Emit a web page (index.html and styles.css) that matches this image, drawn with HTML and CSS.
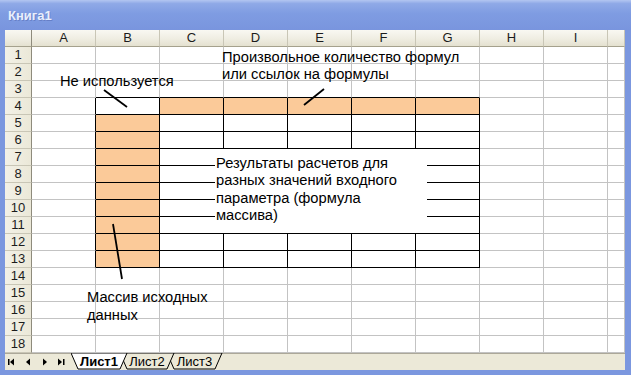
FILE: index.html
```html
<!DOCTYPE html>
<html lang="ru">
<head>
<meta charset="utf-8">
<title>Книга1</title>
<link rel="stylesheet" href="styles.css">
</head>
<body>
<div class="window">
  <div class="titlebar"><span class="title">Книга1</span></div>
  <div class="client">
    <div class="sheet">
      <div class="grid">
        <div class="cn"></div><div class="ch">A</div><div class="ch">B</div><div class="ch">C</div><div class="ch">D</div><div class="ch">E</div><div class="ch">F</div><div class="ch">G</div><div class="ch">H</div><div class="ch">I</div><div class="ch"></div>

        <div class="rh">1</div><div class="c"></div><div class="c"></div><div class="c"></div><div class="c"></div><div class="c"></div><div class="c"></div><div class="c"></div><div class="c"></div><div class="c"></div><div class="c"></div>
        <div class="rh">2</div><div class="c"></div><div class="c"></div><div class="c"></div><div class="c"></div><div class="c"></div><div class="c"></div><div class="c"></div><div class="c"></div><div class="c"></div><div class="c"></div>
        <div class="rh">3</div><div class="c"></div><div class="c bb"></div><div class="c bb"></div><div class="c bb"></div><div class="c bb"></div><div class="c bb"></div><div class="c bb"></div><div class="c"></div><div class="c"></div><div class="c"></div>
        <div class="rh">4</div><div class="c br"></div><div class="c br bb"></div><div class="c o br bb"></div><div class="c o br bb"></div><div class="c o br bb"></div><div class="c o br bb"></div><div class="c o br bb"></div><div class="c"></div><div class="c"></div><div class="c"></div>
        <div class="rh">5</div><div class="c br"></div><div class="c o br bb"></div><div class="c br bb"></div><div class="c br bb"></div><div class="c br bb"></div><div class="c br bb"></div><div class="c br bb"></div><div class="c"></div><div class="c"></div><div class="c"></div>
        <div class="rh">6</div><div class="c br"></div><div class="c o br bb"></div><div class="c br bb"></div><div class="c br bb"></div><div class="c br bb"></div><div class="c br bb"></div><div class="c br bb"></div><div class="c"></div><div class="c"></div><div class="c"></div>
        <div class="rh">7</div><div class="c br"></div><div class="c o br bb"></div><div class="c br bb"></div><div class="c br bb"></div><div class="c br bb"></div><div class="c br bb"></div><div class="c br bb"></div><div class="c"></div><div class="c"></div><div class="c"></div>
        <div class="rh">8</div><div class="c br"></div><div class="c o br bb"></div><div class="c br bb"></div><div class="c br bb"></div><div class="c br bb"></div><div class="c br bb"></div><div class="c br bb"></div><div class="c"></div><div class="c"></div><div class="c"></div>
        <div class="rh">9</div><div class="c br"></div><div class="c o br bb"></div><div class="c br bb"></div><div class="c br bb"></div><div class="c br bb"></div><div class="c br bb"></div><div class="c br bb"></div><div class="c"></div><div class="c"></div><div class="c"></div>
        <div class="rh">10</div><div class="c br"></div><div class="c o br bb"></div><div class="c br bb"></div><div class="c br bb"></div><div class="c br bb"></div><div class="c br bb"></div><div class="c br bb"></div><div class="c"></div><div class="c"></div><div class="c"></div>
        <div class="rh">11</div><div class="c br"></div><div class="c o br bb"></div><div class="c br bb"></div><div class="c br bb"></div><div class="c br bb"></div><div class="c br bb"></div><div class="c br bb"></div><div class="c"></div><div class="c"></div><div class="c"></div>
        <div class="rh">12</div><div class="c br"></div><div class="c o br bb"></div><div class="c br bb"></div><div class="c br bb"></div><div class="c br bb"></div><div class="c br bb"></div><div class="c br bb"></div><div class="c"></div><div class="c"></div><div class="c"></div>
        <div class="rh">13</div><div class="c br"></div><div class="c o br bb"></div><div class="c br bb"></div><div class="c br bb"></div><div class="c br bb"></div><div class="c br bb"></div><div class="c br bb"></div><div class="c"></div><div class="c"></div><div class="c"></div>
        <div class="rh">14</div><div class="c"></div><div class="c"></div><div class="c"></div><div class="c"></div><div class="c"></div><div class="c"></div><div class="c"></div><div class="c"></div><div class="c"></div><div class="c"></div>
        <div class="rh">15</div><div class="c"></div><div class="c"></div><div class="c"></div><div class="c"></div><div class="c"></div><div class="c"></div><div class="c"></div><div class="c"></div><div class="c"></div><div class="c"></div>
        <div class="rh">16</div><div class="c"></div><div class="c"></div><div class="c"></div><div class="c"></div><div class="c"></div><div class="c"></div><div class="c"></div><div class="c"></div><div class="c"></div><div class="c"></div>
        <div class="rh">17</div><div class="c"></div><div class="c"></div><div class="c"></div><div class="c"></div><div class="c"></div><div class="c"></div><div class="c"></div><div class="c"></div><div class="c"></div><div class="c"></div>
        <div class="rh">18</div><div class="c"></div><div class="c"></div><div class="c"></div><div class="c"></div><div class="c"></div><div class="c"></div><div class="c"></div><div class="c"></div><div class="c"></div><div class="c"></div>
      </div>

      <div class="note note-results">Результаты расчетов для<br>разных значений входного<br>параметра (формула<br>массива)</div>

      <svg class="pointers" width="620" height="323" viewBox="0 0 620 323">
        <line x1="99" y1="60" x2="122" y2="77"/>
        <line x1="319" y1="59" x2="299" y2="75"/>
        <line x1="108" y1="194" x2="117" y2="249"/>
      </svg>

      <div class="note note-unused">Не используется</div>
      <div class="note note-formulas">Произвольное количество формул<br>или ссылок на формулы</div>
      <div class="note note-array">Массив исходных<br>данных</div>
    </div>

    <div class="tabbar">
      <svg class="nav" width="66" height="17" viewBox="0 0 66 17">
        <rect x="3" y="5" width="1.5" height="6"/>
        <polygon points="5,8 9,4.5 9,11.5"/>
        <polygon points="21,8 25,4.5 25,11.5"/>
        <polygon points="42,8 38,4.5 38,11.5"/>
        <polygon points="57,8 53,4.5 53,11.5"/>
        <rect x="58" y="5" width="1.5" height="6"/>
      </svg>
      <div class="tabs">
        <svg class="tab-shapes" width="160" height="17" viewBox="0 0 160 17">
          <polygon class="tab-back" points="96,0 103,16 144,16 151,0"/>
          <polygon class="tab-back" points="49,0 56,16 96,16 103,0"/>
          <polygon class="tab-front" points="0,0 7,16 49,16 56,0"/>
        </svg>
        <span class="tab tab-active">Лист1</span>
        <span class="tab tab-2">Лист2</span>
        <span class="tab tab-3">Лист3</span>
      </div>
    </div>
  </div>
</div>
</body>
</html>
```

FILE: styles.css
```css
* {
  box-sizing: border-box;
  margin: 0;
  padding: 0;
}

html, body {
  width: 631px;
  height: 375px;
  overflow: hidden;
  background: #ffffff;
}

body {
  font-family: "Liberation Sans", Arial, sans-serif;
  color: #000;
}

.window {
  width: 631px;
  height: 375px;
  display: flex;
  flex-direction: column;
  background: #7b97df;
}

.titlebar {
  height: 30px;
  flex: 0 0 30px;
  display: flex;
  align-items: center;
  padding-left: 8px;
  background: linear-gradient(180deg, #b3c6f1 0%, #8fa9e7 12%, #7f9ce2 45%, #7995de 100%);
}

.title {
  font-size: 13px;
  font-weight: bold;
  color: #e9effc;
  text-shadow: 1px 1px 0 rgba(60, 80, 150, 0.35);
  margin-top: 1px;
}

.client {
  flex: 1;
  margin: 0 6px 5px 5px;
  display: flex;
  flex-direction: column;
  background: #fff;
}

.sheet {
  position: relative;
  height: 323px;
}

.grid {
  display: grid;
  grid-template-columns: 27px repeat(9, 64px) 17px;
  grid-auto-rows: 17px;
  background: #fff;
}

.c {
  border-right: 1px solid #c3c3c3;
  border-bottom: 1px solid #c3c3c3;
}

.c.br { border-right-color: #000; }
.c.bb { border-bottom-color: #000; }
.c.o { background: #fbca99; }

.cn, .ch {
  background: linear-gradient(180deg, #f9f8f2 0%, #efede2 55%, #e4e1d0 100%);
  border-right: 1px solid #c9c6b6;
  border-bottom: 1px solid #a5a18d;
  font-size: 13px;
  line-height: 16px;
  text-align: center;
  color: #1c1c1c;
}

.cn {
  border-right: 1px solid #8e8b7c;
}

.rh {
  background: linear-gradient(90deg, #f3f1e7 0%, #ebe8d8 100%);
  border-right: 1px solid #8e8b7c;
  border-bottom: 1px solid #c9c6b6;
  font-size: 13px;
  line-height: 16px;
  text-align: center;
  color: #1c1c1c;
}

.note {
  position: absolute;
  font-size: 14.7px;
  line-height: 17px;
  white-space: nowrap;
  color: #000;
}

.note-unused {
  left: 55px;
  top: 43px;
}

.note-formulas {
  left: 217px;
  top: 19px;
}

.note-results {
  left: 210px;
  top: 119px;
  width: 212px;
  height: 84px;
  background: #fff;
  padding: 6px 0 0 1px;
  line-height: 17.3px;
}

.note-array {
  left: 82px;
  top: 259px;
  line-height: 17.5px;
}

.pointers {
  position: absolute;
  left: 0;
  top: 0;
  pointer-events: none;
}

.pointers line {
  stroke: #000;
  stroke-width: 1.8;
}

.tabbar {
  height: 17px;
  flex: 0 0 17px;
  display: flex;
  align-items: stretch;
  background: #ece9d8;
  border-top: 1px solid #aca899;
}

.nav {
  flex: 0 0 66px;
  fill: #000;
}

.tabs {
  position: relative;
  display: flex;
  width: 160px;
  height: 16px;
}

.tab-shapes {
  position: absolute;
  left: 0;
  top: -1px;
}

.tab-shapes polygon {
  stroke: #000;
  stroke-width: 1;
}

.tab-front { fill: #ffffff; }
.tab-back { fill: #ece9d8; }

.tab {
  position: relative;
  font-size: 13px;
  line-height: 16px;
  text-align: center;
  color: #000;
}

.tab-active {
  font-weight: bold;
  width: 42px;
  margin-left: 7px;
}

.tab-2 {
  width: 40px;
  margin-left: 7px;
}

.tab-3 {
  width: 41px;
  margin-left: 7px;
}
```
